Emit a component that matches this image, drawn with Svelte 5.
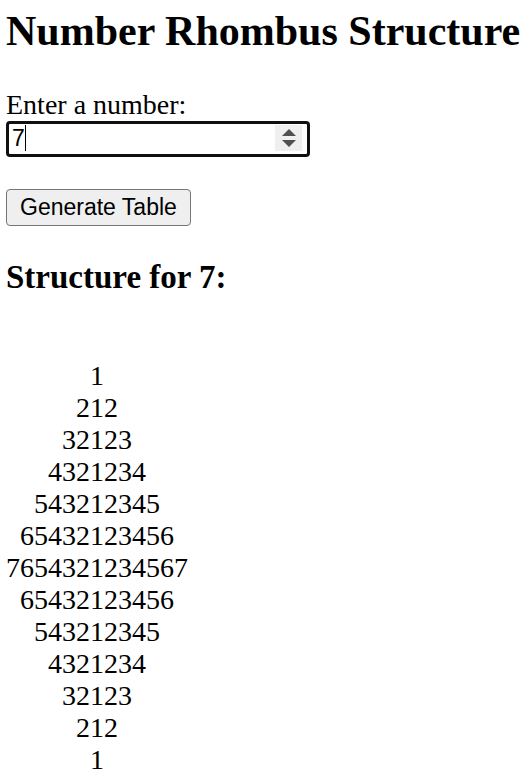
<script>
  let value = $state('7');
  let shown = $state(7);

  const line = (k) => {
    const right = Array.from({ length: k }, (_, i) => i + 1);
    return [...right.slice(1).reverse(), ...right].join('');
  };

  const rows = $derived(
    Array.from({ length: 2 * shown - 1 }, (_, i) => {
      const k = shown - Math.abs(shown - 1 - i);
      return { pad: '\u00a0'.repeat(2 * (shown - k)), text: line(k) };
    })
  );

  const step = (d) => (value = String((Number(value) || 0) + d));

  function generate(event) {
    event.preventDefault();
    shown = Math.max(1, Math.floor(Number(value)) || 1);
  }

  function focusOnLoad(node) {
    node.focus();
  }
</script>

<main>
  <h1>Number Rhombus Structure</h1>
  <form onsubmit={generate}>
    <label for="number">Enter a number:</label>
    <div class="field">
      <div class="entry">
        <input id="number" type="text" inputmode="numeric" bind:value use:focusOnLoad />
        <span class="caret" style:left="{value.length * 13}px"></span>
      </div>
      <div class="spin">
        <button type="button" aria-label="Increase" onclick={() => step(1)}>
          <svg viewBox="0 0 14 7"><path d="M0 7L7 0L14 7Z" /></svg>
        </button>
        <button type="button" aria-label="Decrease" onclick={() => step(-1)}>
          <svg viewBox="0 0 14 7"><path d="M0 0L7 7L14 0Z" /></svg>
        </button>
      </div>
    </div>
    <button class="generate" type="submit">Generate Table</button>
  </form>
  <h2>Structure for {shown}:</h2>
  <div class="rhombus">
    {#each rows as row}
      <div>{row.pad}{row.text}</div>
    {/each}
  </div>
</main>

<style>
  :global(body) {
    margin: 0;
    background: #fff;
  }
  main {
    padding: 8px 6px 0;
    color: #000;
    font: 28px/32px 'Liberation Serif', 'Times New Roman', serif;
  }
  h1 {
    margin: 0;
    font-size: 42px;
    line-height: 46px;
    white-space: nowrap;
  }
  form {
    display: flex;
    flex-direction: column;
    align-items: flex-start;
    padding-top: 35px;
  }
  .field {
    display: flex;
    align-items: flex-start;
    box-sizing: border-box;
    width: 304px;
    max-width: 100%;
    height: 36px;
    padding: 1px 5px 0 3px;
    border: 3px solid #101010;
    border-radius: 4px;
  }
  .entry {
    position: relative;
    flex: 1;
    min-width: 0;
  }
  input {
    display: block;
    box-sizing: border-box;
    width: 100%;
    height: 26px;
    padding: 0;
    border: 0;
    outline: 0;
    background: none;
    color: #000;
    caret-color: transparent;
    font: 23px/26px 'Liberation Sans', Arial, sans-serif;
  }
  .caret {
    position: absolute;
    top: 0;
    width: 1px;
    height: 26px;
    background: #000;
  }
  .spin {
    display: flex;
    flex-direction: column;
    justify-content: center;
    gap: 4px;
    width: 27px;
    height: 26px;
    background: #efefef;
  }
  .spin button {
    display: flex;
    justify-content: center;
    padding: 0;
    border: 0;
    background: none;
  }
  svg {
    display: block;
    width: 14px;
    height: 7px;
    fill: #505050;
  }
  .generate {
    box-sizing: border-box;
    height: 37px;
    margin-top: 32px;
    padding: 0 13px 2px;
    border: 1px solid #767676;
    border-radius: 4px;
    background: #efefef;
    color: #000;
    font: 23px/32px 'Liberation Sans', Arial, sans-serif;
  }
  h2 {
    margin: 32px 0 64px;
    font-size: 33px;
    line-height: 38px;
  }
  .rhombus {
    white-space: nowrap;
  }
</style>
